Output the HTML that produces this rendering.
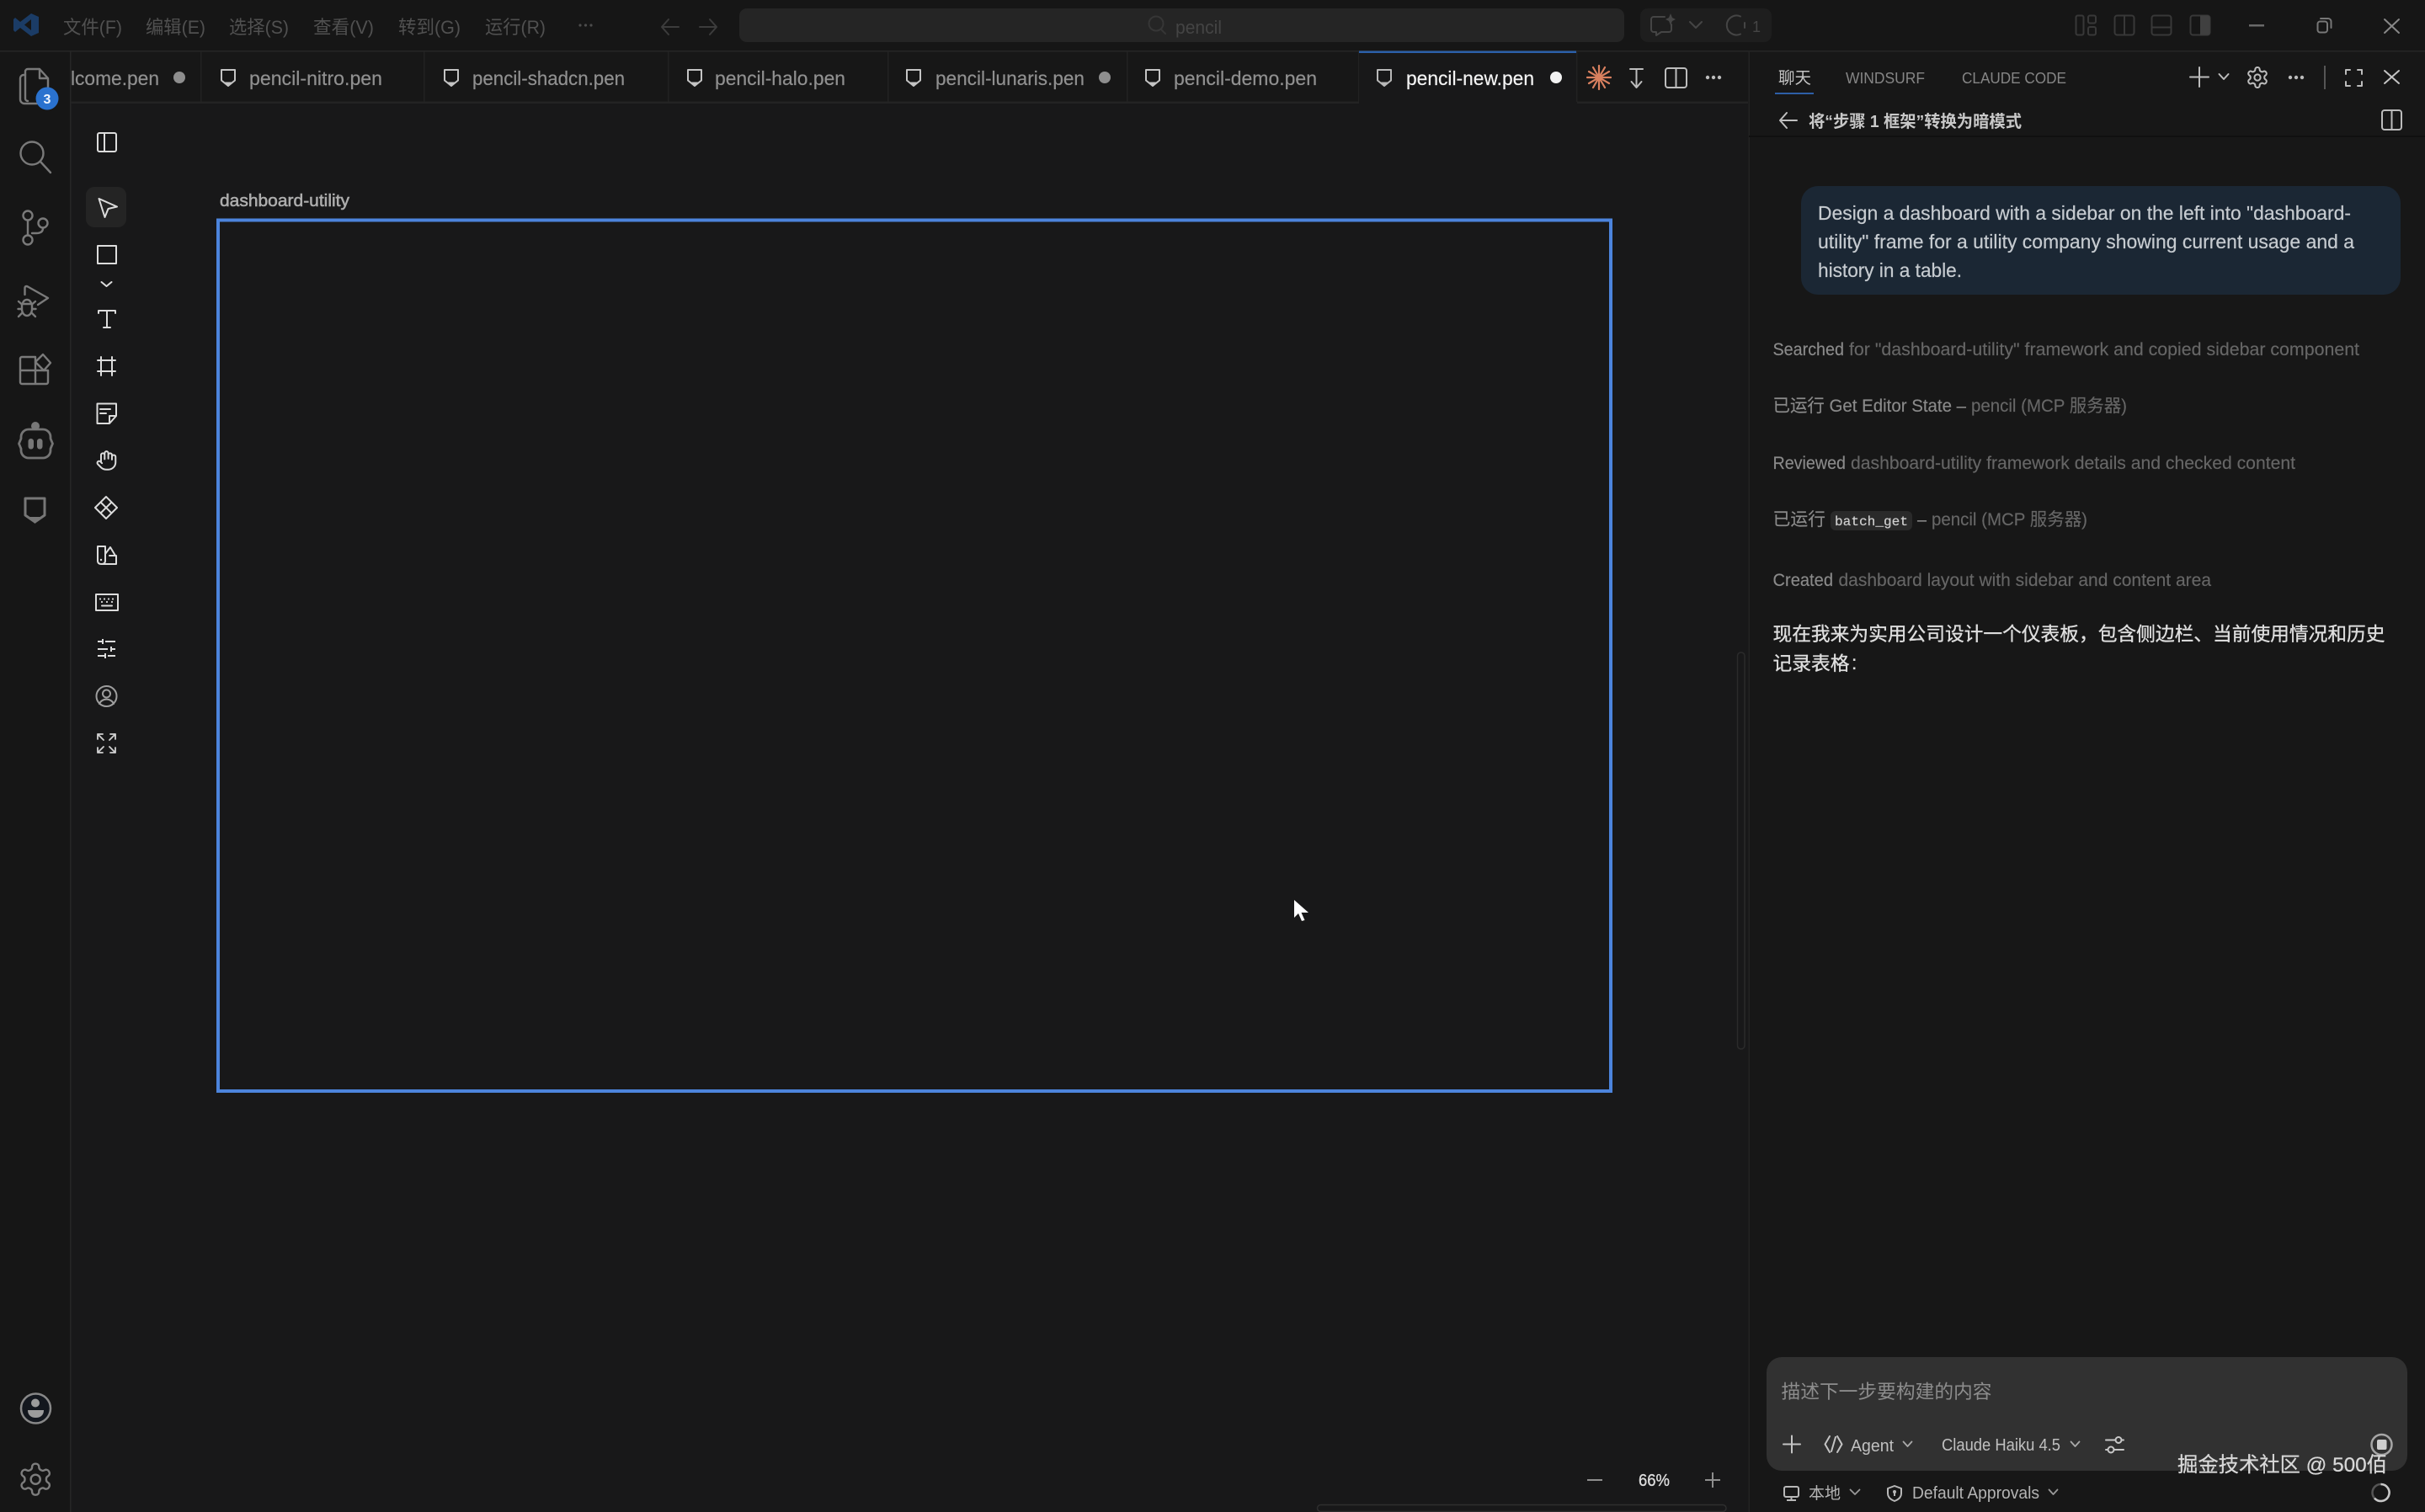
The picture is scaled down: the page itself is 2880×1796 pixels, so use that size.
<!DOCTYPE html>
<html lang="zh">
<head>
<meta charset="utf-8">
<title>pencil-new.pen</title>
<style>
html,body{margin:0;padding:0;width:2880px;height:1796px;overflow:hidden;background:#181819}
svg{display:block;position:absolute;left:0;top:0}
text{font-family:"Liberation Sans","Noto Sans CJK SC",sans-serif;white-space:pre}
.m{font-size:22px;fill:#505050}
.tab{font-size:23px;fill:#909090;stroke:#909090;stroke-width:.2px}
.bub{font-size:23px;fill:#c6cbd0;stroke:#c6cbd0;stroke-width:.2px}
.a1{font-size:21px;fill:#8a8a8a;stroke:#8a8a8a;stroke-width:.15px}
.a2{font-size:21px;fill:#666;stroke:#666;stroke-width:.15px}
.cn{font-size:22.7px;fill:#dedede;stroke:#dedede;stroke-width:.35px}
.s{fill:none;stroke-linecap:round;stroke-linejoin:round}
</style>
</head>
<body>
<svg width="2880" height="1796" viewBox="0 0 2880 1796" xmlns="http://www.w3.org/2000/svg">
<defs>
<g id="pen"><path d="M1 1H17V13.500L9 20L1 13.500Z" fill="none" stroke="currentColor" stroke-width="2" stroke-linejoin="round"/><path d="M4.500 15.500H13.500L9 20Z" fill="currentColor"/></g>
<path id="gear" d="M12.22 2h-.44a2 2 0 0 0-2 2v.18a2 2 0 0 1-1 1.73l-.43.25a2 2 0 0 1-2 0l-.15-.08a2 2 0 0 0-2.73.73l-.22.38a2 2 0 0 0 .73 2.73l.15.1a2 2 0 0 1 1 1.72v.51a2 2 0 0 1-1 1.74l-.15.09a2 2 0 0 0-.73 2.73l.22.38a2 2 0 0 0 2.73.73l.15-.08a2 2 0 0 1 2 0l.43.25a2 2 0 0 1 1 1.73V20a2 2 0 0 0 2 2h.44a2 2 0 0 0 2-2v-.18a2 2 0 0 1 1-1.73l.43-.25a2 2 0 0 1 2 0l.15.08a2 2 0 0 0 2.73-.73l.22-.39a2 2 0 0 0-.73-2.73l-.15-.08a2 2 0 0 1-1-1.74v-.5a2 2 0 0 1 1-1.74l.15-.09a2 2 0 0 0 .73-2.73l-.22-.38a2 2 0 0 0-2.73-.73l-.15.08a2 2 0 0 1-2 0l-.43-.25a2 2 0 0 1-1-1.73V4a2 2 0 0 0-2-2zM15 12a3 3 0 1 1-6 0a3 3 0 0 1 6 0z"/>
</defs>

<!-- backgrounds -->
<rect width="2880" height="1796" fill="#181819"/>
<rect width="2880" height="60" fill="#161616"/>
<rect x="0" y="60" width="83" height="1736" fill="#161616"/>
<rect x="84" y="60" width="1992" height="61" fill="#171717"/>
<rect x="2076" y="60" width="804" height="1736" fill="#171717"/>
<rect x="0" y="60" width="2880" height="1.5" fill="#262626"/>
<rect x="83" y="60" width="1.5" height="1736" fill="#262626"/>
<rect x="2076.5" y="60" width="1.5" height="1736" fill="#232323"/>

<!-- title bar -->
<path d="M37 16L46 20V39L37 43L24 33L18 38L16 36V23L18 21L24 26ZM37 23L29 29.500L37 36Z" fill="#1b3c66" fill-rule="evenodd"/>
<text class="m" x="75" y="40" textLength="70" lengthAdjust="spacingAndGlyphs">文件(F)</text>
<text class="m" x="173" y="40" textLength="71" lengthAdjust="spacingAndGlyphs">编辑(E)</text>
<text class="m" x="272" y="40" textLength="71" lengthAdjust="spacingAndGlyphs">选择(S)</text>
<text class="m" x="372" y="40" textLength="72" lengthAdjust="spacingAndGlyphs">查看(V)</text>
<text class="m" x="473" y="40" textLength="74" lengthAdjust="spacingAndGlyphs">转到(G)</text>
<text class="m" x="576" y="40" textLength="72" lengthAdjust="spacingAndGlyphs">运行(R)</text>
<g fill="#4c4c4c"><circle cx="689" cy="30" r="1.600"/><circle cx="695.500" cy="30" r="1.600"/><circle cx="702" cy="30" r="1.600"/></g>
<path class="s" d="M806 32H786M794 23L786 32L794 41" stroke="#3c3c3c" stroke-width="2"/>
<path class="s" d="M831 32H851M843 23L851 32L843 41" stroke="#3c3c3c" stroke-width="2"/>
<rect x="878" y="10" width="1051" height="40" rx="9" fill="#252525"/>
<circle cx="1373" cy="28" r="8.500" fill="none" stroke="#363636" stroke-width="2"/>
<path class="s" d="M1379 35L1384 40" stroke="#363636" stroke-width="2"/>
<text x="1396" y="40" font-size="22" fill="#444" textLength="55" lengthAdjust="spacingAndGlyphs">pencil</text>

<rect x="1948" y="10" width="156" height="40" rx="9" fill="#1e1e1e"/>
<path class="s" d="M1977 20H1964A3 3 0 0 0 1961 23V35A3 3 0 0 0 1964 38H1967V42L1973 38H1982A3 3 0 0 0 1985 35V29" stroke="#454545" stroke-width="2"/>
<path d="M1984 16L1986 21L1990 23L1986 25L1984 30L1982 25L1978 23L1982 21Z" fill="#454545"/>
<path class="s" d="M2007 26L2014 33L2021 26" stroke="#454545" stroke-width="2"/>
<path class="s" d="M2067 19.500A11.500 11.500 0 1 0 2067 40.500M2072 27V33" stroke="#454545" stroke-width="2"/>
<text x="2081" y="38" font-size="18" fill="#454545">1</text>

<g fill="none" stroke="#383838" stroke-width="2">
<rect x="2465.500" y="18.500" width="9" height="23" rx="2"/><rect x="2480" y="18.500" width="9" height="9" rx="2"/><rect x="2480" y="32" width="9" height="9.500" rx="2"/>
<rect x="2511.500" y="18.500" width="23" height="23" rx="3"/><path d="M2523 18.500V41.500"/>
<rect x="2555.500" y="18.500" width="23" height="23" rx="3"/><path d="M2555.500 32.500H2578.500"/>
<rect x="2601.500" y="18.500" width="23" height="23" rx="3"/></g>
<path d="M2613 18.500H2621.500A3 3 0 0 1 2624.500 21.500V38.500A3 3 0 0 1 2621.500 41.500H2613Z" fill="#404040"/>
<rect x="2671" y="29" width="18" height="2.500" fill="#6a6a6a"/>
<rect x="2752.500" y="25.500" width="11.500" height="13" rx="3" fill="none" stroke="#777" stroke-width="2"/>
<path class="s" d="M2756 22H2765A3.500 3.500 0 0 1 2768.500 25.500V33" stroke="#777" stroke-width="2"/>
<path class="s" d="M2832 23L2849 39M2849 23L2832 39" stroke="#888" stroke-width="2"/>

<!-- tabs -->
<g fill="#222"><rect x="238" y="61" width="1.500" height="60"/><rect x="503" y="61" width="1.500" height="60"/><rect x="793" y="61" width="1.500" height="60"/><rect x="1054" y="61" width="1.500" height="60"/><rect x="1338" y="61" width="1.500" height="60"/><rect x="1613" y="61" width="1.500" height="60"/><rect x="1872" y="61" width="1.500" height="60"/></g>
<rect x="84" y="120.500" width="1530" height="2.500" fill="#232323"/>
<rect x="1873" y="120.500" width="203" height="2.500" fill="#232323"/>
<rect x="1614" y="60.500" width="258" height="2.500" fill="#2b5fa8"/>
<rect x="1614" y="63" width="258" height="60" fill="#181819"/>
<text class="tab" x="84" y="101" textLength="105" lengthAdjust="spacingAndGlyphs">lcome.pen</text>
<circle cx="213" cy="92" r="7" fill="#8e8e8e"/>
<use href="#pen" x="262" y="82" color="#c4c4c4"/>
<text class="tab" x="296" y="101" textLength="158" lengthAdjust="spacingAndGlyphs">pencil-nitro.pen</text>
<use href="#pen" x="527" y="82" color="#c4c4c4"/>
<text class="tab" x="561" y="101" textLength="181" lengthAdjust="spacingAndGlyphs">pencil-shadcn.pen</text>
<use href="#pen" x="816" y="82" color="#c4c4c4"/>
<text class="tab" x="849" y="101" textLength="155" lengthAdjust="spacingAndGlyphs">pencil-halo.pen</text>
<use href="#pen" x="1076" y="82" color="#c4c4c4"/>
<text class="tab" x="1111" y="101" textLength="177" lengthAdjust="spacingAndGlyphs">pencil-lunaris.pen</text>
<circle cx="1312" cy="92" r="7" fill="#8e8e8e"/>
<use href="#pen" x="1360" y="82" color="#c4c4c4"/>
<text class="tab" x="1394" y="101" textLength="170" lengthAdjust="spacingAndGlyphs">pencil-demo.pen</text>
<use href="#pen" x="1635" y="82" color="#b8b8b8"/>
<text class="tab" x="1670" y="101" textLength="152" lengthAdjust="spacingAndGlyphs" style="fill:#f4f4f4;stroke:#f4f4f4">pencil-new.pen</text>
<circle cx="1848" cy="92" r="7" fill="#f2f2f2"/>
<g stroke="#d9805f" stroke-width="2.200" stroke-linecap="round">
<path d="M1899 78V106M1885 92H1913M1892 80L1906 104M1906 80L1892 104M1887 85L1911 99M1911 85L1887 99"/></g>
<circle cx="1899" cy="92" r="4" fill="#d9805f"/>
<path class="s" d="M1936 82H1951M1943.500 82V103M1937.500 97L1943.500 104L1949.500 97" stroke="#bdbdbd" stroke-width="2"/>
<rect x="1978" y="81" width="25" height="23" rx="3" fill="none" stroke="#bdbdbd" stroke-width="2"/><path d="M1990.500 81V104" stroke="#bdbdbd" stroke-width="2"/>
<g fill="#bdbdbd"><circle cx="2028" cy="92" r="2.200"/><circle cx="2035" cy="92" r="2.200"/><circle cx="2042" cy="92" r="2.200"/></g>

<!-- activity bar -->
<g class="s" stroke="#7a7a7a" stroke-width="2.400" fill="none">
<path d="M33 120A3 3 0 0 1 30 117V85A3 3 0 0 1 33 82H47L57 93V104M47 82V93H57"/>
<path d="M30 89H28A4 4 0 0 0 24 93V118A5 5 0 0 0 29 123H44"/>
<circle cx="38" cy="182" r="13.500"/><path d="M48 192L60 205"/>
<circle cx="33" cy="256" r="5.500"/><circle cx="51" cy="265" r="5.500"/><circle cx="33" cy="285" r="5.500"/><path d="M33 262V279M51 271C51 276 47 277 43 277H38"/>
<path d="M29.500 350V342Q30 339 33 340.500L57 354L45 362"/>
<path d="M26 361H38V367A6 8 0 0 1 26 367Z"/><path d="M27 361A5 5 0 0 1 37 361"/>
<path d="M22 358L26 361.500M42 358L38 361.500M21.500 367H25.500M42.500 367H38.500M22 376L26 372M42 376L38 372"/>
<path d="M24 426A2 2 0 0 1 26 424H42V456H26A2 2 0 0 1 24 454ZM24 440H57M42 440H57V454A2 2 0 0 1 55 456H42"/>
<path d="M42 430L51 421L60 431L52 440Z"/>
</g>
<path d="M34 510H51A9 9 0 0 1 60 519V521L62.500 527L60 533V535A9 9 0 0 1 51 544H34A9 9 0 0 1 25 535V533L22.500 527L25 521V519A9 9 0 0 1 34 510Z" fill="none" stroke="#747474" stroke-width="2.800" stroke-linejoin="round"/>
<circle cx="42" cy="506" r="5" fill="#777"/><rect x="33.500" y="521" width="6.500" height="12.500" rx="3.200" fill="#777"/><rect x="44" y="521" width="6.500" height="12.500" rx="3.200" fill="#777"/>
<path d="M30 592H53V612L41.500 620L30 612Z" fill="none" stroke="#777" stroke-width="3" stroke-linejoin="round"/><path d="M34 614H49L41.500 622Z" fill="#777"/>
<circle cx="56" cy="117" r="13.500" fill="#2a72cf"/>
<text x="56" y="123" font-size="16" font-weight="700" fill="#f0f6ff" text-anchor="middle">3</text>
<circle cx="42.500" cy="1673" r="17.500" fill="#13171e" stroke="#888" stroke-width="2.500"/>
<circle cx="42" cy="1666.500" r="5" fill="#9c9c9c"/><path d="M33 1675H52C52 1681 48 1684 42.500 1684C37 1684 33 1681 33 1675Z" fill="#9c9c9c"/>
<use href="#gear" transform="translate(20 1735) scale(1.850)" fill="none" stroke="#7d7d7d" stroke-width="1.300"/>

<!-- toolbar -->
<rect x="102" y="222" width="48" height="48" rx="10" fill="#242424"/>
<g class="s" stroke="#dcdcdc" stroke-width="2" fill="none">
<rect x="116" y="158" width="22" height="22" rx="2"/><path d="M124 158V180"/>
<path d="M117.500 236L139 245.500L128.500 248L124.500 258Z"/>
<rect x="116" y="292" width="22" height="21"/>
<path d="M120.500 335L126.500 340L132.500 335"/>
<path d="M117 372V369H137V372M127 369V389M123 389H131"/>
<path d="M116 428H137M116 441H137M120 424V446M133 424V446"/>
<path d="M115.500 479.500H138V494L130 503H115.500ZM130 503V494H138M119 486H131M119 491H126"/>
<path transform="translate(113.500 534) scale(1.080)" stroke-width="1.850" d="M18 11V6a2 2 0 0 0-2-2a2 2 0 0 0-2 2M14 10V4a2 2 0 0 0-2-2a2 2 0 0 0-2 2v2M10 10.500V6a2 2 0 0 0-2-2a2 2 0 0 0-2 2v8M18 8a2 2 0 1 1 4 0v6a8 8 0 0 1-8 8h-2c-2.800 0-4.500-.860-5.990-2.340l-3.600-3.600a2 2 0 0 1 2.830-2.820L7 15"/>
<path d="M126 590L139 603L126 616L113 603ZM119.500 596.500L132.500 609.500M132.500 596.500L119.500 609.500"/>
<path d="M116 649H125V666Q125 670 120.500 670Q116 670 116 666ZM125 658L131 650L137 660M130 660H138V670H122"/>
<rect x="114" y="706" width="26" height="19"/><path d="M121 719.500H133"/>
<path stroke-linecap="butt" d="M116 762H122M122 759V765M125 762H137M116 771H128M132 768V774M132 771H137M116 779H125M125 776V782M128 779H137"/>
</g>
<g fill="#dcdcdc"><circle cx="119" cy="711.500" r="1.100"/><circle cx="124" cy="711.500" r="1.100"/><circle cx="129" cy="711.500" r="1.100"/><circle cx="134" cy="711.500" r="1.100"/><circle cx="121" cy="715" r="1.100"/><circle cx="127" cy="715" r="1.100"/><circle cx="133" cy="715" r="1.100"/><circle cx="120" cy="665" r="1.200"/></g>
<g class="s" fill="none" stroke="#9e9e9e" stroke-width="2"><circle cx="126.500" cy="827" r="12"/><circle cx="126.500" cy="824" r="4.500"/><path d="M118 836A9 8 0 0 1 135 836"/></g>
<path class="s" stroke="#d0d0d0" stroke-width="1.800" d="M116 878V872H122M116 872L123 879M131 872H137V878M137 872L130 879M116 888V894H122M116 894L123 887M131 894H137V888M137 894L130 887"/>

<!-- canvas -->
<text x="261" y="245" font-size="20.500" fill="#adadad" stroke="#adadad" stroke-width=".55" textLength="154" lengthAdjust="spacingAndGlyphs">dashboard-utility</text>
<rect x="259" y="261.500" width="1654" height="1034.500" fill="none" stroke="#4c84dc" stroke-width="4"/>
<path d="M1537 1069V1090L1542 1085L1546 1094L1549.500 1093L1545.500 1084H1554Z" fill="#fff"/>
<rect x="2063.500" y="775" width="8.500" height="471" rx="4" fill="none" stroke="#2b2b2b" stroke-width="1.500"/>
<rect x="1564.500" y="1787.500" width="485.500" height="8" rx="4" fill="none" stroke="#2e2e2e" stroke-width="1.500"/>
<path d="M1885 1758H1903M2025 1758H2043M2034 1749V1767" stroke="#8e8e8e" stroke-width="2" fill="none"/>
<text x="1946" y="1765" font-size="20" fill="#dcdcdc" stroke="#dcdcdc" stroke-width=".35" textLength="37" lengthAdjust="spacingAndGlyphs">66%</text>

<!-- right panel header -->
<text x="2112" y="99" font-size="19.500" fill="#c4c4c4">聊天</text>
<rect x="2108" y="110" width="46" height="2" fill="#2d5fa6"/>
<text x="2192" y="99" font-size="18" fill="#858585" textLength="94" lengthAdjust="spacingAndGlyphs">WINDSURF</text>
<text x="2330" y="99" font-size="18" fill="#858585" textLength="124" lengthAdjust="spacingAndGlyphs">CLAUDE CODE</text>
<path class="s" stroke="#bcbcbc" stroke-width="2" d="M2601 91.500H2623M2612 80V103"/>
<path class="s" stroke="#bcbcbc" stroke-width="2" d="M2635.500 88L2641 94L2646.500 88"/>
<use href="#gear" transform="translate(2666.600 77.600) scale(1.200)" fill="none" stroke="#bcbcbc" stroke-width="1.700"/>
<g fill="#bcbcbc"><circle cx="2720" cy="92" r="2.200"/><circle cx="2727" cy="92" r="2.200"/><circle cx="2734" cy="92" r="2.200"/></g>
<rect x="2760" y="78" width="2" height="28" fill="#555"/>
<path class="s" stroke="#bcbcbc" stroke-width="2" d="M2786 88V83H2791M2800 83H2805V88M2805 97V102H2800M2791 102H2786V97"/>
<path class="s" stroke="#c4c4c4" stroke-width="2" d="M2832 84L2849 99M2849 84L2832 99"/>
<path class="s" stroke="#c0c0c0" stroke-width="2" d="M2134 143H2114M2122 134L2114 143L2122 152"/>
<text x="2148" y="151" font-size="20" font-weight="700" fill="#c8c8c8" textLength="253" lengthAdjust="spacingAndGlyphs">将“步骤 1 框架”转换为暗模式</text>
<rect x="2829" y="131" width="23" height="23" rx="3" fill="none" stroke="#bcbcbc" stroke-width="2"/><path d="M2840.500 131V154" stroke="#bcbcbc" stroke-width="2"/>
<rect x="2077" y="161" width="803" height="2" fill="#101010"/>

<!-- chat -->
<rect x="2139" y="221" width="712" height="129" rx="20" fill="#1b2734"/>
<text class="bub" x="2159" y="261" textLength="633" lengthAdjust="spacingAndGlyphs">Design a dashboard with a sidebar on the left into "dashboard-</text>
<text class="bub" x="2159" y="295" textLength="637" lengthAdjust="spacingAndGlyphs">utility" frame for a utility company showing current usage and a</text>
<text class="bub" x="2159" y="329" textLength="171" lengthAdjust="spacingAndGlyphs">history in a table.</text>

<text class="a1" x="2105.500" y="422" textLength="84.500" lengthAdjust="spacingAndGlyphs">Searched</text>
<text class="a2" x="2196" y="422" textLength="606" lengthAdjust="spacingAndGlyphs">for "dashboard-utility" framework and copied sidebar component</text>
<text class="a1" x="2105.500" y="489" textLength="229.500" lengthAdjust="spacingAndGlyphs">已运行 Get Editor State –</text>
<text class="a2" x="2341" y="489" textLength="185" lengthAdjust="spacingAndGlyphs">pencil (MCP 服务器)</text>
<text class="a1" x="2105.500" y="557" textLength="86.500" lengthAdjust="spacingAndGlyphs">Reviewed</text>
<text class="a2" x="2198" y="557" textLength="528" lengthAdjust="spacingAndGlyphs">dashboard-utility framework details and checked content</text>
<text class="a1" x="2105.500" y="624" textLength="62.500" lengthAdjust="spacingAndGlyphs">已运行</text>
<rect x="2174" y="607" width="97" height="23" rx="6" fill="#2a2a2a"/>
<text x="2179" y="624" font-size="16" fill="#cfcfcf" stroke="#cfcfcf" stroke-width=".2" style="font-family:'Liberation Mono',monospace" textLength="87" lengthAdjust="spacingAndGlyphs">batch_get</text>
<text class="a1" x="2277" y="624" textLength="11" lengthAdjust="spacingAndGlyphs">–</text>
<text class="a2" x="2294" y="624" textLength="185" lengthAdjust="spacingAndGlyphs">pencil (MCP 服务器)</text>
<text class="a1" x="2105.500" y="696" textLength="71.500" lengthAdjust="spacingAndGlyphs">Created</text>
<text class="a2" x="2183.500" y="696" textLength="442.500" lengthAdjust="spacingAndGlyphs">dashboard layout with sidebar and content area</text>
<text class="cn" x="2105.500" y="761" textLength="727" lengthAdjust="spacingAndGlyphs">现在我来为实用公司设计一个仪表板，包含侧边栏、当前使用情况和历史</text>
<text class="cn" x="2105.500" y="796" textLength="91" lengthAdjust="spacingAndGlyphs">记录表格</text>
<text class="cn" x="2199" y="795">:</text>

<!-- input -->
<rect x="2098" y="1612" width="761" height="135" rx="18" fill="#313131"/>
<text x="2115.500" y="1661" font-size="22.700" fill="#8c8c8c" textLength="250" lengthAdjust="spacingAndGlyphs">描述下一步要构建的内容</text>
<path class="s" stroke="#c4c4c4" stroke-width="2" d="M2118 1715.500H2138M2128 1705.500V1725.500"/>
<path class="s" stroke="#c4c4c4" stroke-width="2" d="M2173 1706L2167.500 1715.500L2173 1725M2182 1706L2187.500 1715.500L2182 1725M2180 1707L2175 1724"/>
<text x="2198" y="1724" font-size="20" fill="#c0c0c0" textLength="51" lengthAdjust="spacingAndGlyphs">Agent</text>
<path class="s" stroke="#aaa" stroke-width="1.800" d="M2260.500 1712.500L2265.500 1718L2270.500 1712.500"/>
<text x="2306" y="1723" font-size="20" fill="#c0c0c0" textLength="141" lengthAdjust="spacingAndGlyphs">Claude Haiku 4.5</text>
<path class="s" stroke="#aaa" stroke-width="1.800" d="M2459.500 1712.500L2464.500 1718L2469.500 1712.500"/>
<g class="s" stroke="#c8c8c8" stroke-width="2" fill="none"><path d="M2501 1710.500H2512.500M2519.500 1710.500H2522M2501 1722H2503.500M2510.500 1722H2522"/><circle cx="2516" cy="1710.500" r="3.500"/><circle cx="2507" cy="1722" r="3.500"/></g>
<circle cx="2828.500" cy="1716" r="12" fill="none" stroke="#a6a6a6" stroke-width="2.500"/><rect x="2823" y="1710" width="11.500" height="12" rx="2" fill="#cfcfcf"/>
<text x="2586" y="1748" font-size="24.500" fill="#d8d8d8" stroke="#d8d8d8" stroke-width=".25" textLength="249" lengthAdjust="spacingAndGlyphs">掘金技术社区 @ 500佰</text>

<rect x="2119" y="1766" width="17" height="12" rx="2" fill="none" stroke="#b8b8b8" stroke-width="2"/><path d="M2122 1782H2133M2127.500 1778V1782" stroke="#b8b8b8" stroke-width="2" fill="none"/>
<text x="2148" y="1780" font-size="19" fill="#b4b4b4">本地</text>
<path class="s" stroke="#999" stroke-width="1.800" d="M2197.500 1769.500L2203 1775L2208.500 1769.500"/>
<path class="s" fill="none" stroke="#b8b8b8" stroke-width="2" d="M2250 1765L2258 1768V1774Q2258 1780 2250 1783Q2242 1780 2242 1774V1768Z"/><circle cx="2250" cy="1772" r="2" fill="#b8b8b8"/><path d="M2250 1773V1777" stroke="#b8b8b8" stroke-width="2"/>
<text x="2271" y="1780" font-size="20" fill="#b4b4b4" textLength="151" lengthAdjust="spacingAndGlyphs">Default Approvals</text>
<path class="s" stroke="#999" stroke-width="1.800" d="M2433.500 1769.500L2438.500 1775L2443.500 1769.500"/>
<circle cx="2827.500" cy="1773" r="10" fill="none" stroke="#555" stroke-width="2.500"/>
<path d="M2827.500 1763A10 10 0 1 1 2820 1779.500" fill="none" stroke="#c8c8c8" stroke-width="2.500"/>
</svg>
</body>
</html>
